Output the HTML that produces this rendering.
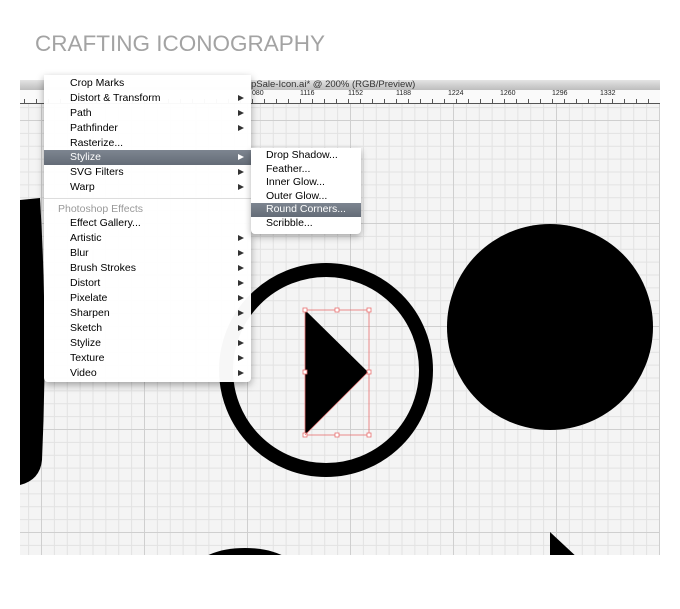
<!DOCTYPE html>
<html><head><meta charset="utf-8"><style>
body{margin:0;width:680px;height:609px;background:#fff;position:relative;overflow:hidden;font-family:"Liberation Sans",sans-serif}
.title{position:absolute;left:35px;top:31px;font-size:22.5px;color:#a3a3a3;letter-spacing:0;font-weight:300}
.win{position:absolute;left:20px;top:80px;width:640px;height:475px;overflow:hidden;
background-color:#f4f4f4;
background-image:linear-gradient(#cfcfcf 1px,transparent 1px),linear-gradient(90deg,#cfcfcf 1px,transparent 1px),linear-gradient(#e2e2e2 1px,transparent 1px),linear-gradient(90deg,#e2e2e2 1px,transparent 1px);
background-size:103px 103px,103px 103px,12.875px 12.875px,12.875px 12.875px;background-position:21px 40px,21px 40px,21px 40px,21px 40px}
.tb{position:absolute;left:0;top:0;width:640px;height:10px;background:linear-gradient(#e4e4e4,#bdbdbd);font-size:9.5px;color:#333}
.ruler{position:absolute;left:0;top:10px;width:640px;height:13px;background:#fafafa;border-bottom:1px solid #555;font-size:7px;color:#222;
background-image:linear-gradient(90deg,#555 1px,transparent 1px);background-size:12px 4px;background-repeat:repeat-x;background-position:4px 9px}
.menu{position:absolute;left:44px;top:75px;width:207px;height:307px;background:rgba(255,255,255,0.97);box-shadow:0 3px 8px rgba(0,0,0,.35);border-radius:0 0 4px 4px;font-size:10.5px;color:#000}
.it{position:absolute;left:26px;height:15px;line-height:15px;width:181px}
.it.ar::after{content:"";position:absolute;right:7px;top:4px;border-left:6px solid #333;border-top:3.5px solid transparent;border-bottom:3.5px solid transparent}
.hl{background:linear-gradient(#7d8590,#646c77);color:#fff;left:0;padding-left:26px;width:181px}
.hl.ar::after{border-left-color:#fff}
.sub{position:absolute;left:251px;top:148px;width:110px;height:86px;background:#fff;box-shadow:0 3px 7px rgba(0,0,0,.3);border-radius:0 0 4px 4px;font-size:10.5px;color:#000}
.sub div{position:absolute;left:0;width:95px;padding-left:15px;height:13.5px;line-height:13.5px}
</style></head><body>
<div class="title">CRAFTING ICONOGRAPHY</div>
<div class="win">
<svg style="position:absolute;left:0;top:0" width="640" height="475">
<path d="M0 120 L20 118 Q28 250 22 380 Q20 400 0 405 Z" fill="#000"/>
<circle cx="306" cy="290" r="100" fill="none" stroke="#000" stroke-width="14"/>
<circle cx="530" cy="247" r="103" fill="#000"/>
<polygon points="285,230 285,355 348,292" fill="#000"/>
<rect x="285" y="230" width="64" height="125" fill="none" stroke="#e87070" stroke-width="0.8"/>
<g fill="#fff" stroke="#e87070" stroke-width="0.8">
<rect x="283" y="228" width="4" height="4"/><rect x="315" y="228" width="4" height="4"/><rect x="347" y="228" width="4" height="4"/>
<rect x="283" y="290" width="4" height="4"/><rect x="347" y="290" width="4" height="4"/>
<rect x="283" y="353" width="4" height="4"/><rect x="315" y="353" width="4" height="4"/><rect x="347" y="353" width="4" height="4"/></g>
<line x1="285" y1="355" x2="348" y2="292" stroke="#e87070" stroke-width="0.7"/>
<ellipse cx="225" cy="490" rx="50" ry="22" fill="#000"/>
<polygon points="530,452 530,480 560,480" fill="#000"/>
</svg>
<div class="tb"><span style="position:absolute;left:231px;top:-1px">pSale-Icon.ai* @ 200% (RGB/Preview)</span></div>
<div class="ruler"><span style="position:absolute;left:232px;top:0">080</span><span style="position:absolute;left:280px;top:0">1116</span><span style="position:absolute;left:328px;top:0">1152</span><span style="position:absolute;left:376px;top:0">1188</span><span style="position:absolute;left:428px;top:0">1224</span><span style="position:absolute;left:480px;top:0">1260</span><span style="position:absolute;left:532px;top:0">1296</span><span style="position:absolute;left:580px;top:0">1332</span></div>
</div>
<div class="menu">
<div class="it" style="top:1px">Crop Marks</div>
<div class="it ar" style="top:16px">Distort &amp; Transform</div>
<div class="it ar" style="top:31px">Path</div>
<div class="it ar" style="top:46px">Pathfinder</div>
<div class="it" style="top:61px">Rasterize...</div>
<div class="it ar hl" style="top:75px">Stylize</div>
<div class="it ar" style="top:90px">SVG Filters</div>
<div class="it ar" style="top:105px">Warp</div>
<div style="position:absolute;left:0;top:123px;width:207px;height:1px;background:#ddd"></div>
<div class="it" style="top:127px;left:14px;color:#999">Photoshop Effects</div>
<div class="it" style="top:141px">Effect Gallery...</div>
<div class="it ar" style="top:156px">Artistic</div>
<div class="it ar" style="top:171px">Blur</div>
<div class="it ar" style="top:186px">Brush Strokes</div>
<div class="it ar" style="top:201px">Distort</div>
<div class="it ar" style="top:216px">Pixelate</div>
<div class="it ar" style="top:231px">Sharpen</div>
<div class="it ar" style="top:246px">Sketch</div>
<div class="it ar" style="top:261px">Stylize</div>
<div class="it ar" style="top:276px">Texture</div>
<div class="it ar" style="top:291px">Video</div>
</div>
<div class="sub">
<div style="top:1px">Drop Shadow...</div>
<div style="top:14.5px">Feather...</div>
<div style="top:28px">Inner Glow...</div>
<div style="top:41.5px">Outer Glow...</div>
<div style="top:55px;background:linear-gradient(#7d8590,#646c77);color:#fff">Round Corners...</div>
<div style="top:68.5px">Scribble...</div>
</div>
</body></html>
